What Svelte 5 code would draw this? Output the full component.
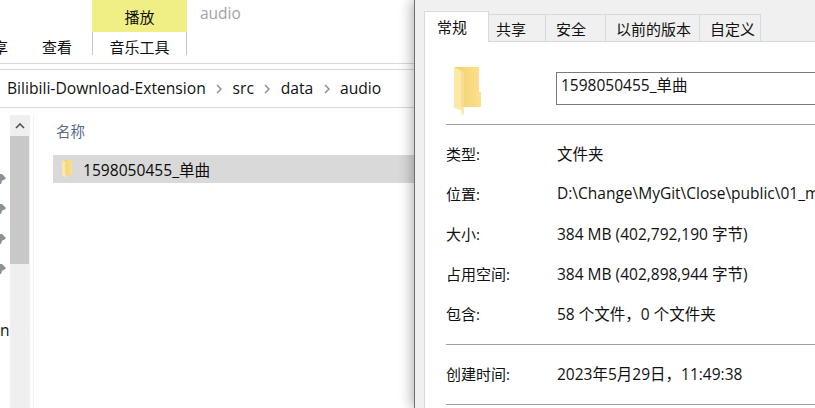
<script>
  const crumbs = ["Bilibili-Download-Extension", "src", "data", "audio"];
  const tabs = [
    { label: "共享", width: 57, pad: 7 },
    { label: "安全", width: 60, pad: 10 },
    { label: "以前的版本", width: 94, pad: 10 },
    { label: "自定义", width: 61, pad: 10 }
  ];
  const pins = [0, 1, 2, 3];
  const props = [
    ["类型:", "文件夹"],
    ["位置:", "D:\\Change\\MyGit\\Close\\public\\01_music\\Bilibili-Download-Extension"],
    ["大小:", "384 MB (402,792,190 字节)"],
    ["占用空间:", "384 MB (402,898,944 字节)"],
    ["包含:", "58 个文件，0 个文件夹"]
  ];
</script>

<div class="screen">
  <section class="explorer">
    <div class="title-row">
      <div class="play-tab">播放</div>
      <div class="window-title">audio</div>
    </div>
    <div class="ribbon-row">
      <div class="cut-tab"><span>共享</span></div>
      <div class="ribbon-tab">查看</div>
      <div class="music-tab">音乐工具</div>
    </div>
    <div class="address">
      {#each crumbs as crumb, i}
        {#if i > 0}
          <svg class="chevron" width="6" height="10" viewBox="0 0 6 10">
            <path d="M1 1l4 4-4 4" fill="none" stroke="#8a8a8a" stroke-width="1.4" />
          </svg>
        {/if}
        <span>{crumb}</span>
      {/each}
    </div>
    <div class="body">
      <div class="nav">
        <div class="pins">
          {#each pins as p}
            <svg width="6" height="12" viewBox="0 0 6 12">
              <path d="M0 1h2l1 1 3 3-2 2H3l-1 1-1 3H0z" fill="#8b9296" />
            </svg>
          {/each}
        </div>
        <div class="nav-cut"><span>n</span></div>
      </div>
      <div class="scrollbar">
        <div class="arrow">
          <svg width="10" height="6" viewBox="0 0 10 6">
            <path d="M1 5l4-4 4 4" fill="none" stroke="#505050" stroke-width="1.6" />
          </svg>
        </div>
        <div class="thumb"></div>
      </div>
      <div class="files">
        <div class="col-head">名称</div>
        <div class="file-row">
          <svg class="folder-small" width="13" height="18" viewBox="0 0 28 48">
            <use href="#folder" />
          </svg>
          <span>1598050455_单曲</span>
        </div>
      </div>
    </div>
  </section>

  <section class="dialog">
    <div class="tabs">
      <div class="tab active">常规</div>
      {#each tabs as tab}
        <div class="tab" style="width: {tab.width}px; padding-left: {tab.pad}px">{tab.label}</div>
      {/each}
    </div>
    <div class="panel">
      <div class="head">
        <svg class="folder-big" width="28" height="48" viewBox="0 0 28 48">
          <defs>
            <linearGradient id="back" x1="0" x2="1" y1="0" y2="0">
              <stop offset="0" stop-color="#f2cf70" />
              <stop offset="1" stop-color="#fde08c" />
            </linearGradient>
            <g id="folder">
              <path d="M0 0h25v25h2v15H8V5z" fill="url(#back)" />
              <path d="M0 0l10 6v41l-2 1-1-5-7-2z" fill="#fde8a4" />
              <path d="M7 4l3 2v34H7z" fill="#f6dd95" />
            </g>
          </defs>
          <use href="#folder" />
        </svg>
        <div class="name-input">1598050455_单曲</div>
      </div>
      <div class="rows first">
        {#each props as [label, value]}
          <div class="prop"><span>{label}</span><span class="value">{value}</span></div>
        {/each}
      </div>
      <div class="rows last">
        <div class="prop"><span>创建时间:</span><span class="value">2023年5月29日，11:49:38</span></div>
      </div>
    </div>
  </section>
</div>

<style>
  :global(body) {
    margin: 0;
    background: #fff;
  }

  .screen {
    width: 815px;
    height: 408px;
    display: flex;
    overflow: hidden;
    font-family: "Open Sans", "Noto Sans CJK SC", sans-serif;
    font-size: 15.5px;
    color: #111;
  }

  .explorer {
    width: 414px;
    flex: none;
    display: flex;
    flex-direction: column;
  }

  .title-row {
    height: 32px;
    display: flex;
    padding-left: 92px;
  }

  .play-tab {
    width: 95px;
    background: #f0ef85;
    text-align: center;
    line-height: 34px;
    font-size: 15px;
  }

  .window-title {
    margin-left: 13px;
    line-height: 27px;
    color: #a3a3a3;
  }

  .ribbon-row {
    height: 23px;
    display: flex;
    font-size: 15px;
    line-height: 31px;
    padding-bottom: 8px;
    border-bottom: 1px solid #d9d9d9;
  }

  .cut-tab {
    width: 8px;
    overflow: hidden;
    display: flex;
    justify-content: flex-end;
    white-space: nowrap;
  }

  .ribbon-tab {
    margin-left: 34px;
    width: 50px;
  }

  .music-tab {
    width: 93px;
    text-align: center;
    border-left: 1px solid #c4c4c4;
    border-right: 1px solid #c4c4c4;
  }

  .address {
    margin-top: 5px;
    padding: 0 0 2px 7px;
    height: 35px;
    display: flex;
    align-items: center;
    gap: 11.4px;
    font-size: 15.65px;
    border-top: 1px solid #d9d9d9;
    border-bottom: 1px solid #d9d9d9;
  }

  .chevron {
    margin: 2px -1px 0;
  }

  .body {
    flex: 1;
    display: flex;
    padding-top: 7px;
    min-height: 0;
  }

  .nav {
    width: 10px;
    flex: none;
    overflow: hidden;
  }

  .pins {
    display: flex;
    flex-direction: column;
    gap: 18px;
    padding-top: 58px;
  }

  .nav-cut {
    margin-top: 45px;
    width: 9px;
    line-height: 20px;
  }

  .scrollbar {
    width: 20px;
    flex: none;
    background: #efefef;
    border-right: 3px solid #fff;
  }

  .arrow {
    height: 21px;
    display: flex;
    align-items: center;
    justify-content: center;
  }

  .thumb {
    height: 128px;
    width: 19px;
    background: #c8c8c8;
  }

  .files {
    flex: 1;
    padding-left: 19px;
    border-left: 1px solid #f2f2f2;
  }

  .col-head {
    height: 40px;
    line-height: 34px;
    padding-left: 3px;
    font-size: 14.5px;
    color: #5a6c88;
  }

  .file-row {
    height: 28px;
    display: flex;
    align-items: center;
    background: #d9d9d9;
    color: #0c0c0c;
    white-space: nowrap;
    font-size: 15.6px;
  }

  .folder-small {
    margin: 0 9px 0 8px;
  }

  .dialog {
    flex: 1;
    min-width: 0;
    display: flex;
    flex-direction: column;
    background: #f0f0f0;
    border-left: 1px solid #6e6e6e;
    padding-left: 9px;
    box-shadow: -3px 0 12px rgba(0, 0, 0, 0.28);
    position: relative;
  }

  .tabs {
    height: 41px;
    display: flex;
    align-items: flex-end;
    flex: none;
  }

  .tab {
    height: 27px;
    box-sizing: border-box;
    line-height: 28px;
    font-size: 15px;
    white-space: nowrap;
    border: 1px solid #d9d9d9;
    border-bottom: none;
    border-left: none;
  }

  .tab.active {
    width: 65px;
    height: 31px;
    margin-bottom: -1px;
    padding-left: 12px;
    line-height: 30px;
    background: #fff;
    border-left: 1px solid #d9d9d9;
    position: relative;
    z-index: 1;
  }

  .panel {
    flex: 1;
    background: #fff;
    border-top: 1px solid #d9d9d9;
    border-left: 1px solid #d9d9d9;
    padding-left: 21px;
    min-height: 0;
  }

  .head {
    height: 82px;
    display: flex;
    align-items: flex-start;
    border-bottom: 1px solid #a0a0a0;
  }

  .folder-big {
    margin: 25px 0 0 8px;
    flex: none;
  }

  .name-input {
    margin: 30px 0 0 74px;
    height: 33px;
    width: 280px;
    flex: none;
    box-sizing: border-box;
    border: 1px solid #7a7a7a;
    padding-left: 4px;
    line-height: 25px;
    white-space: nowrap;
  }

  .rows {
    border-bottom: 1px solid #a0a0a0;
    width: 400px;
  }

  .rows.first {
    padding: 10px 0 9px;
  }

  .rows.last {
    padding: 10px 0 9px;
  }

  .prop {
    height: 40px;
    box-sizing: border-box;
    padding-bottom: 4px;
    display: grid;
    grid-template-columns: 111px 1fr;
    align-items: center;
    font-size: 15px;
    white-space: nowrap;
    overflow: hidden;
  }

  .value {
    font-size: 15.5px;
  }
</style>
